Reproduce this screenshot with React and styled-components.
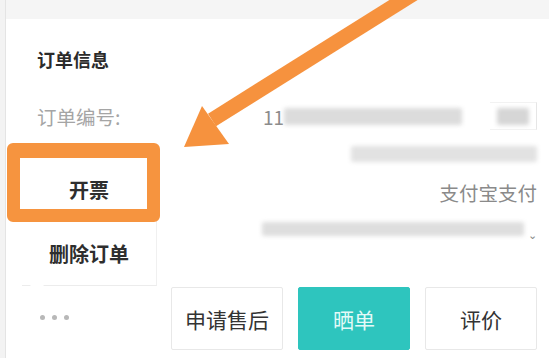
import React from 'react';
import styled, { createGlobalStyle } from 'styled-components';

const GlobalStyle = createGlobalStyle`
  html, body {
    margin: 0;
    padding: 0;
    background: #f3f3f3;
    font-family: "Noto Sans CJK SC", "Noto Sans", sans-serif;
  }
`;

const Page = styled.div`
  position: relative;
  width: 549px;
  height: 358px;
  overflow: hidden;
  background: #f3f3f3;
`;

const Card = styled.div`
  margin-left: 5px;
  height: 100%;
  background: #fff;
  border-left: 1px solid #e4e4e4;
  display: flex;
  flex-direction: column;
`;

const TopBand = styled.div`
  height: 19px;
  background: #f5f5f5;
`;

const Info = styled.div`
  padding: 28px 12px 0 31px;
  display: flex;
  flex-direction: column;
`;

const Title = styled.div`
  height: 24px;
  line-height: 24px;
  font-size: 18px;
  font-weight: 700;
  color: #2b2b2b;
  margin-bottom: 26px;
`;

const Row = styled.div`
  height: ${(p) => p.h || 38}px;
  display: flex;
  align-items: center;
  justify-content: ${(p) => (p.right ? 'flex-end' : 'space-between')};
`;

const Label = styled.span`
  font-size: 19.5px;
  color: #a5a5a5;
`;

const Value = styled.div`
  display: flex;
  align-items: center;
  gap: ${(p) => p.gap || 0}px;
  font-size: 19.5px;
  color: #8a8a8a;
`;

const Digits = styled.span`
  font-size: 19px;
  color: #8c8c8c;
`;

const Blur = styled.span`
  display: inline-block;
  width: ${(p) => p.w}px;
  height: ${(p) => p.h || 17}px;
  background: ${(p) => p.c || '#dcdcdc'};
  filter: blur(2px);
  border-radius: 2px;
`;

const CopyBox = styled.span`
  display: flex;
  align-items: center;
  justify-content: center;
  width: 46px;
  height: 26px;
  border-right: 1px solid #e6e6e6;
  border-top: 1px solid #f2f2f2;
  border-bottom: 1px solid #f2f2f2;
`;

const Chevron = styled.span`
  font-size: 11px;
  color: #888;
  margin-top: 10px;
`;

const Actions = styled.div`
  margin-top: 40px;
  padding: 0 12px 0 34px;
  display: flex;
  align-items: center;
`;

const Dots = styled.div`
  display: flex;
  gap: 7px;
  margin-top: -2px;
  span {
    width: 5px;
    height: 5px;
    border-radius: 50%;
    background: #b8b8b8;
  }
`;

const Buttons = styled.div`
  margin-left: auto;
  display: flex;
  gap: 15px;
`;

const Btn = styled.div`
  width: 112px;
  height: 63px;
  box-sizing: border-box;
  display: flex;
  align-items: center;
  justify-content: center;
  font-size: 21px;
  color: ${(p) => (p.primary ? '#e4faf8' : '#333')};
  background: ${(p) => (p.primary ? '#2ec5be' : '#fff')};
  border: 1px solid ${(p) => (p.primary ? '#2ec5be' : '#e8e8e8')};
  border-radius: 2px;
`;

const Menu = styled.div`
  position: absolute;
  left: 22px;
  top: 157px;
  width: 134px;
  border-bottom: 1px solid #ececec;
  border-right: 1px solid #f0f0f0;
  background: #fff;
  display: flex;
  flex-direction: column;
  &::after {
    content: '';
    position: absolute;
    left: 8px;
    bottom: -8px;
    border-left: 7px solid transparent;
    border-right: 7px solid transparent;
    border-top: 8px solid #fff;
  }
`;

const MenuItem = styled.div`
  height: 64px;
  display: flex;
  align-items: center;
  justify-content: center;
  font-size: 20px;
  font-weight: 700;
  color: #2e2e2e;
`;

const Highlight = styled.div`
  position: absolute;
  left: 7px;
  top: 143px;
  width: 153px;
  height: 79px;
  box-sizing: border-box;
  border: 13px solid #f6943f;
  border-top-width: 15px;
  border-radius: 6px;
`;

const Overlay = styled.svg`
  position: absolute;
  left: 0;
  top: 0;
  pointer-events: none;
`;

export default function App() {
  return (
    <Page>
      <GlobalStyle />
      <Card>
        <TopBand />
        <Info>
          <Title>订单信息</Title>
          <Row>
            <Label>订单编号:</Label>
            <Value gap={0}>
              <Digits>11</Digits>
              <Blur w={178} />
              <span style={{ width: 28 }} />
              <CopyBox>
                <Blur w={32} c="#d6d6d6" />
              </CopyBox>
            </Value>
          </Row>
          <Row right>
            <Blur w={186} h={16} c="#e2e2e2" />
          </Row>
          <Row right>
            <Value>支付宝支付</Value>
          </Row>
          <Row right h={36}>
            <Value gap={4}>
              <Blur w={262} h={14} c="#dedede" />
              <Chevron>⌄</Chevron>
            </Value>
          </Row>
        </Info>
        <Actions>
          <Dots>
            <span />
            <span />
            <span />
          </Dots>
          <Buttons>
            <Btn>申请售后</Btn>
            <Btn primary>晒单</Btn>
            <Btn>评价</Btn>
          </Buttons>
        </Actions>
      </Card>
      <Menu>
        <MenuItem>开票</MenuItem>
        <MenuItem>删除订单</MenuItem>
      </Menu>
      <Highlight />
      <Overlay width="549" height="358" viewBox="0 0 549 358">
        <line x1="445" y1="-26" x2="212" y2="120" stroke="#f6923e" strokeWidth="15" />
        <polygon points="184,147 202,106 229,144" fill="#f6923e" />
      </Overlay>
    </Page>
  );
}
